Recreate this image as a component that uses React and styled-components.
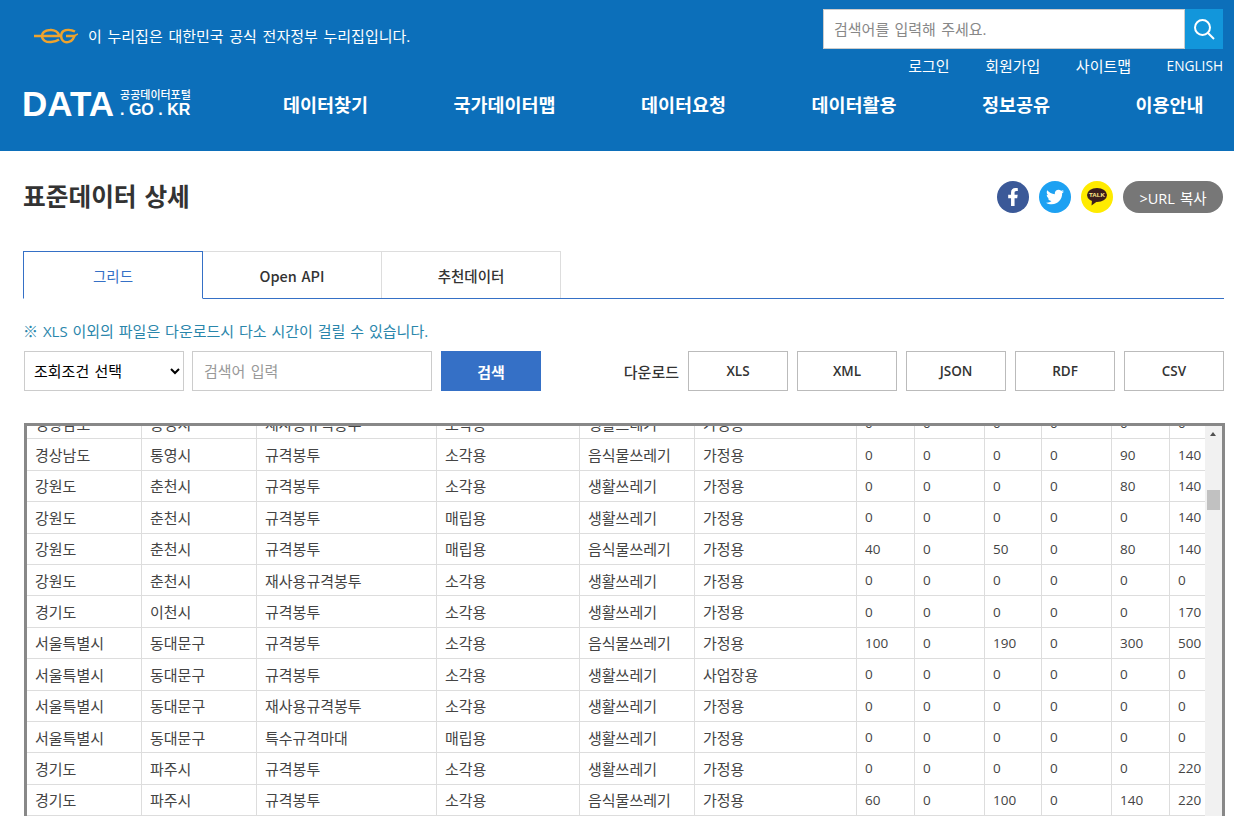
import React, { useLayoutEffect, useRef } from 'react'
import styled, { createGlobalStyle } from 'styled-components'
import { FaFacebookF, FaTwitter } from 'react-icons/fa'

const FONT = '"Open Sans", "Noto Sans CJK KR", sans-serif'

const GlobalStyle = createGlobalStyle`
  html, body {
    margin: 0;
    height: 816px;
    overflow: hidden;
    background: #fff;
    font-family: ${FONT};
    color: #333;
    word-spacing: 1.4px;
  }
  input, select, button { word-spacing: 1.4px; }
  * { box-sizing: border-box; }
`

const Header = styled.header`
  height: 151px;
  background: #0c6fba;
  padding: 9px 11px 0 23px;
  color: #fff;
`

const TopRow = styled.div`
  display: flex;
  justify-content: space-between;
  align-items: flex-start;
  height: 72px;
`

const GovNotice = styled.div`
  display: flex;
  align-items: center;
  gap: 10px;
  margin: 15px 0 0 10px;
  font-size: 15px;
  line-height: 24px;
  word-spacing: 1.8px;
`

const SearchColumn = styled.div`
  display: flex;
  flex-direction: column;
  align-items: flex-end;
`

const SearchBox = styled.div`
  display: flex;
  width: 400px;
  height: 40px;
`

const SearchInput = styled.input`
  flex: 1;
  min-width: 0;
  height: 40px;
  border: 1px solid #ccc;
  padding: 0 10px;
  font: 15px ${FONT};
  background: #fff;
  &::placeholder { color: #888; opacity: 1; }
`

const SearchButton = styled.button`
  width: 38px;
  height: 40px;
  border: 0;
  padding: 0;
  background: #1296db;
  display: flex;
  align-items: center;
  justify-content: center;
`

const UtilLinks = styled.nav`
  display: flex;
  gap: 35.5px;
  margin-top: 8px;
  line-height: 18px;
`

const UtilLink = styled.span`
  font-size: ${p => (p.$latin ? 13.7 : 15)}px;
`

const MainRow = styled.div`
  display: flex;
  align-items: center;
  height: 48px;
`

const Logo = styled.div`
  display: flex;
  align-items: center;
  width: 168px;
  gap: 6px;
`

const LogoMark = styled.span`
  margin: 0 0 4px -1px;
  font: bold 35px/35px "Liberation Sans", sans-serif;
`

const LogoSide = styled.div`
  display: flex;
  flex-direction: column;
  margin-bottom: 3px;
`

const LogoSmall = styled.span`
  font-size: 11px;
  font-weight: 500;
  line-height: 13px;
  word-spacing: 0;
`

const LogoDomain = styled.span`
  font: bold 16px/18px "Liberation Sans", sans-serif;
  word-spacing: 0;
  white-space: pre;
`

const MainNav = styled.nav`
  display: flex;
  gap: 85.4px;
  margin: 0 0 2px 92px;
  font-size: 18.5px;
  font-weight: 700;
`

const Main = styled.main`
  padding: 0 10px 0 23px;
`

const TitleRow = styled.div`
  display: flex;
  justify-content: space-between;
  align-items: flex-start;
  height: 100px;
  padding: 30px 1px 0 0;
`

const PageTitle = styled.h1`
  margin: 0;
  font-size: 24.7px;
  font-weight: 700;
  line-height: 32px;
  color: #333;
`

const ShareGroup = styled.div`
  display: flex;
  gap: 10px;
`

const ShareCircle = styled.span`
  width: 32px;
  height: 32px;
  border-radius: 50%;
  background: ${p => p.$bg};
  color: #fff;
  font-size: 18px;
  display: flex;
  align-items: center;
  justify-content: center;
`

const CopyButton = styled.button`
  width: 100px;
  height: 32px;
  border: 0;
  border-radius: 16px;
  background: #777;
  color: #fff;
  font: 14.5px ${FONT};
  padding: 0;
`

const Tabs = styled.div`
  display: flex;
  align-items: flex-start;
  height: 48px;
  border-bottom: 1px solid #3570c6;
`

const Tab = styled.div`
  width: ${p => p.$width}px;
  height: ${p => (p.$active ? 48 : 47)}px;
  display: flex;
  align-items: center;
  justify-content: center;
  font-family: "Noto Sans CJK KR", sans-serif;
  font-size: 14.5px;
  font-weight: ${p => (p.$active ? 400 : 500)};
  color: ${p => (p.$active ? '#3570c6' : '#333')};
  background: #fff;
  border: 1px solid ${p => (p.$active ? '#3570c6' : '#ddd')};
  border-bottom: ${p => (p.$active ? '1px solid #fff' : '0')};
  border-left-width: ${p => (p.$active ? 1 : 0)}px;
`

const Notice = styled.p`
  margin: 22px 0 0 0;
  font-size: 15px;
  line-height: 20px;
  word-spacing: 1px;
  color: #2a86ab;
`

const FilterRow = styled.div`
  display: flex;
  align-items: center;
  margin-top: 10px;
  height: 40px;
  padding-left: 1px;
`

const ConditionSelect = styled.select`
  width: 160px;
  height: 40px;
  border: 1px solid #ccc;
  background: #fff;
  padding: 0 4px 0 5px;
  font: 15px ${FONT};
  color: #000;
  border-radius: 0;
`

const KeywordInput = styled.input`
  width: 240px;
  height: 40px;
  margin-left: 8px;
  border: 1px solid #ccc;
  padding: 0 11px;
  font: 15px ${FONT};
  &::placeholder { color: #999; opacity: 1; }
`

const SubmitButton = styled.button`
  width: 100px;
  height: 40px;
  margin-left: 9px;
  border: 0;
  background: #3570c6;
  color: #fff;
  font: 700 15px ${FONT};
`

const DownloadLabel = styled.span`
  margin-left: auto;
  margin-right: 9px;
  font-size: 15px;
  font-weight: 500;
  color: #333;
`

const DownloadGroup = styled.div`
  display: flex;
  gap: 9px;
`

const DownloadButton = styled.button`
  width: 100px;
  height: 40px;
  border: 1px solid #bbb;
  background: #fff;
  color: #333;
  font: 600 13.5px ${FONT};
`

const GridBox = styled.div`
  display: flex;
  height: 400px;
  margin: 32px -1px 0 1px;
  border: 3px solid #888;
`

const GridScroll = styled.div`
  flex: 1;
  min-width: 0;
  overflow: hidden;
`

const Table = styled.table`
  width: 1178px;
  table-layout: fixed;
  border-collapse: separate;
  border-spacing: 0;
`

const Row = styled.tr`
  height: 31.4px;
`

const Cell = styled.td`
  padding: 0 0 0 8px;
  border-right: 1px solid #ddd;
  border-bottom: 1px solid #ddd;
  font-size: ${p => (p.$numeric ? 13.5 : 15)}px;
  color: #444;
  white-space: nowrap;
  overflow: hidden;
  &:last-child { border-right: 0; }
`

const ScrollTrack = styled.div`
  width: 17px;
  flex: none;
  background: #f1f1f1;
  position: relative;
`

const ScrollArrow = styled.span`
  position: absolute;
  top: 6px;
  left: 5px;
  width: 0;
  height: 0;
  border-left: 3.5px solid transparent;
  border-right: 3.5px solid transparent;
  border-bottom: 4px solid #505050;
`

const ScrollThumb = styled.span`
  position: absolute;
  top: 64px;
  left: 2px;
  width: 13px;
  height: 20px;
  background: #c1c1c1;
`

const columns = [115, 115, 180, 143, 115, 162, 58, 70, 57, 70, 58, 35]

const rows = [
  ['경상남도', '통영시', '재사용규격봉투', '소각용', '생활쓰레기', '가정용', 0, 0, 0, 0, 0, 0],
  ['경상남도', '통영시', '규격봉투', '소각용', '음식물쓰레기', '가정용', 0, 0, 0, 0, 90, 140],
  ['강원도', '춘천시', '규격봉투', '소각용', '생활쓰레기', '가정용', 0, 0, 0, 0, 80, 140],
  ['강원도', '춘천시', '규격봉투', '매립용', '생활쓰레기', '가정용', 0, 0, 0, 0, 0, 140],
  ['강원도', '춘천시', '규격봉투', '매립용', '음식물쓰레기', '가정용', 40, 0, 50, 0, 80, 140],
  ['강원도', '춘천시', '재사용규격봉투', '소각용', '생활쓰레기', '가정용', 0, 0, 0, 0, 0, 0],
  ['경기도', '이천시', '규격봉투', '소각용', '생활쓰레기', '가정용', 0, 0, 0, 0, 0, 170],
  ['서울특별시', '동대문구', '규격봉투', '소각용', '음식물쓰레기', '가정용', 100, 0, 190, 0, 300, 500],
  ['서울특별시', '동대문구', '규격봉투', '소각용', '생활쓰레기', '사업장용', 0, 0, 0, 0, 0, 0],
  ['서울특별시', '동대문구', '재사용규격봉투', '소각용', '생활쓰레기', '가정용', 0, 0, 0, 0, 0, 0],
  ['서울특별시', '동대문구', '특수규격마대', '매립용', '생활쓰레기', '가정용', 0, 0, 0, 0, 0, 0],
  ['경기도', '파주시', '규격봉투', '소각용', '생활쓰레기', '가정용', 0, 0, 0, 0, 0, 220],
  ['경기도', '파주시', '규격봉투', '소각용', '음식물쓰레기', '가정용', 60, 0, 100, 0, 140, 220],
  ['경기도', '파주시', '규격봉투', '소각용', '생활쓰레기', '가정용', 0, 0, 0, 0, 0, 220],
]

const Emblem = () => (
  <svg width="45" height="18" viewBox="0 0 45 18" fill="none" stroke="#eea32d" strokeWidth="2.4">
    <path d="M1 9 H26 C26 5 21 2.5 17 3 C12 3.5 9 6 9 9 C9 13 13 15.5 18 15 C21 14.7 24 14 26 12.5" />
    <path d="M42 4.5 C38 2.5 33 2.5 30.5 4 C27.5 6 27 12 31 14.5 C34 16 38 15 40 12 L41.5 9 H33" />
    <path d="M41 9 L45 7" strokeWidth="1.4" />
  </svg>
)

const SearchIcon = () => (
  <svg width="22" height="22" viewBox="0 0 22 22" fill="none" stroke="#fff" strokeWidth="2">
    <circle cx="9.5" cy="9.5" r="7.5" />
    <path d="M15 15 L21 21" />
  </svg>
)

const TalkIcon = () => (
  <svg width="20" height="18" viewBox="0 0 20 18">
    <ellipse cx="10" cy="7" rx="10" ry="7" fill="#3c1e1e" />
    <path d="M5 12 L4.5 17.5 L10 13.5 Z" fill="#3c1e1e" />
    <text x="10" y="9.2" textAnchor="middle" fontSize="6.2" fontWeight="700" fill="#ffe98a" fontFamily="Liberation Sans, sans-serif">TALK</text>
  </svg>
)

const App = () => {
  const scrollRef = useRef(null)

  useLayoutEffect(() => {
    scrollRef.current.scrollTop = 18
  }, [])

  return (
    <>
      <GlobalStyle />
      <Header>
        <TopRow>
          <GovNotice>
            <Emblem />
            이 누리집은 대한민국 공식 전자정부 누리집입니다.
          </GovNotice>
          <SearchColumn>
            <SearchBox>
              <SearchInput placeholder="검색어를 입력해 주세요." />
              <SearchButton><SearchIcon /></SearchButton>
            </SearchBox>
            <UtilLinks>
              <UtilLink>로그인</UtilLink>
              <UtilLink>회원가입</UtilLink>
              <UtilLink>사이트맵</UtilLink>
              <UtilLink $latin>ENGLISH</UtilLink>
            </UtilLinks>
          </SearchColumn>
        </TopRow>
        <MainRow>
          <Logo>
            <LogoMark>DATA</LogoMark>
            <LogoSide>
              <LogoSmall>공공데이터포털</LogoSmall>
              <LogoDomain>. GO . KR</LogoDomain>
            </LogoSide>
          </Logo>
          <MainNav>
            <span>데이터찾기</span>
            <span>국가데이터맵</span>
            <span>데이터요청</span>
            <span>데이터활용</span>
            <span>정보공유</span>
            <span>이용안내</span>
          </MainNav>
        </MainRow>
      </Header>
      <Main>
        <TitleRow>
          <PageTitle>표준데이터 상세</PageTitle>
          <ShareGroup>
            <ShareCircle $bg="#3b5998"><FaFacebookF /></ShareCircle>
            <ShareCircle $bg="#1da1f2"><FaTwitter /></ShareCircle>
            <ShareCircle $bg="#ffeb00"><TalkIcon /></ShareCircle>
            <CopyButton>&gt;URL 복사</CopyButton>
          </ShareGroup>
        </TitleRow>
        <Tabs>
          <Tab $active $width={180}>그리드</Tab>
          <Tab $width={179}>Open API</Tab>
          <Tab $width={179}>추천데이터</Tab>
        </Tabs>
        <Notice>※ XLS 이외의 파일은 다운로드시 다소 시간이 걸릴 수 있습니다.</Notice>
        <FilterRow>
          <ConditionSelect defaultValue="none">
            <option value="none">조회조건 선택</option>
          </ConditionSelect>
          <KeywordInput placeholder="검색어 입력" />
          <SubmitButton>검색</SubmitButton>
          <DownloadLabel>다운로드</DownloadLabel>
          <DownloadGroup>
            {['XLS', 'XML', 'JSON', 'RDF', 'CSV'].map(type => (
              <DownloadButton key={type}>{type}</DownloadButton>
            ))}
          </DownloadGroup>
        </FilterRow>
        <GridBox>
          <GridScroll ref={scrollRef}>
            <Table>
              <colgroup>
                {columns.map((w, i) => <col key={i} width={w} />)}
              </colgroup>
              <tbody>
                {rows.map((row, i) => (
                  <Row key={i}>
                    {row.map((value, j) => (
                      <Cell key={j} $numeric={typeof value === 'number'}>{value}</Cell>
                    ))}
                  </Row>
                ))}
              </tbody>
            </Table>
          </GridScroll>
          <ScrollTrack>
            <ScrollArrow />
            <ScrollThumb />
          </ScrollTrack>
        </GridBox>
      </Main>
    </>
  )
}

export default App
